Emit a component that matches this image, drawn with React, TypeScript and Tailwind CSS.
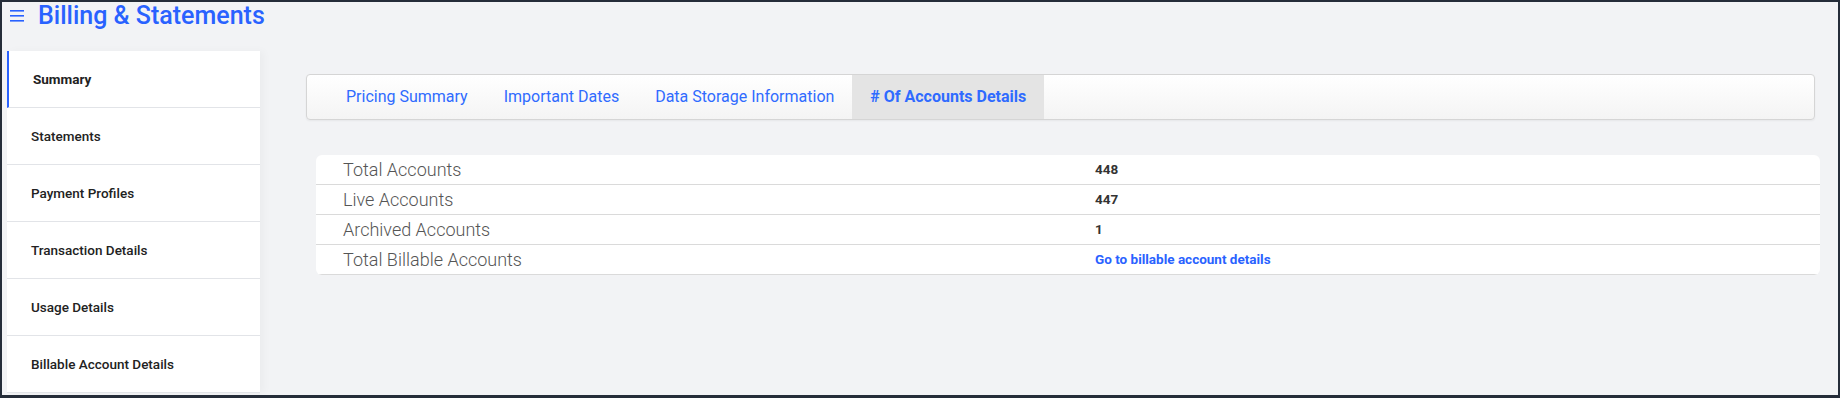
import React from "react";

const sideItems = [
  "Summary",
  "Statements",
  "Payment Profiles",
  "Transaction Details",
  "Usage Details",
  "Billable Account Details",
];

const tabs = [
  "Pricing Summary",
  "Important Dates",
  "Data Storage Information",
  "# Of Accounts Details",
];

const rows = [
  { label: "Total Accounts", value: "448" },
  { label: "Live Accounts", value: "447" },
  { label: "Archived Accounts", value: "1" },
  { label: "Total Billable Accounts", value: "Go to billable account details", link: true },
];

const App = () => {
  const activeSide = "Summary";
  const activeTab = "# Of Accounts Details";

  return (
    <div className="h-[398px] w-full overflow-hidden border-x-2 border-t-2 border-b-[3px] border-[#252d39] bg-[#f2f3f5] font-['Roboto',sans-serif]">
      {/* Header */}
      <div className="flex h-[49px] items-start pl-[8px] pt-[1px]">
        <div className="flex h-[26px] items-center gap-[14px]">
          <svg width="14" height="12" viewBox="0 0 14 12" className="text-[#2962ff]">
            <rect x="0" y="0" width="14" height="1.6" fill="currentColor" />
            <rect x="0" y="5" width="14" height="1.6" fill="currentColor" />
            <rect x="0" y="10" width="14" height="1.6" fill="currentColor" />
          </svg>
          <h1 className="text-[25px] font-medium leading-[26px] text-[#2962ff]">Billing &amp; Statements</h1>
        </div>
      </div>

      <div className="flex">
        {/* Sidebar */}
        <nav className="ml-[5px] w-[253px] bg-white shadow-[4px_0_8px_rgba(0,0,0,0.03)]">
          {sideItems.map((item) => (
            <div
              key={item}
              className={`flex h-[57px] items-center border-b border-[#e2e4e8] pt-[1px] text-[13.5px] text-[#222] ${
                item === activeSide
                  ? "border-l-2 border-l-[#2962ff] pl-[24px] font-bold"
                  : "pl-[24px] font-medium"
              }`}
            >
              {item}
            </div>
          ))}
        </nav>

        {/* Main */}
        <main className="flex-1 pl-[46px] pr-[23px] pt-[23px]">
          <div className="flex h-[46px] items-stretch overflow-hidden rounded-[4px] border border-[#d5d5d5] bg-gradient-to-b from-white to-[#f4f4f4] pl-[21px] shadow-[0_1px_2px_rgba(0,0,0,0.05)]">
            {tabs.map((tab) => (
              <div
                key={tab}
                className={`flex items-center px-[18px] text-[16px] text-[#2f6bff] ${
                  tab === activeTab ? "bg-[#e4e4e4] font-bold" : ""
                }`}
              >
                {tab}
              </div>
            ))}
          </div>

          <div className="ml-[10px] mr-[-5px] mt-[35px] overflow-hidden rounded-[6px] bg-white">
            {rows.map((row) => (
              <div key={row.label} className="grid h-[30px] grid-cols-2 items-center border-b border-[#dadada]">
                <div className="pl-[27px] text-[18px] font-light text-[#555]">{row.label}</div>
                <div
                  className={`pl-[27px] text-[13.5px] font-bold ${
                    row.link ? "text-[#2962ff]" : "text-[#333]"
                  }`}
                >
                  {row.value}
                </div>
              </div>
            ))}
          </div>
        </main>
      </div>
    </div>
  );
};

export default App;
